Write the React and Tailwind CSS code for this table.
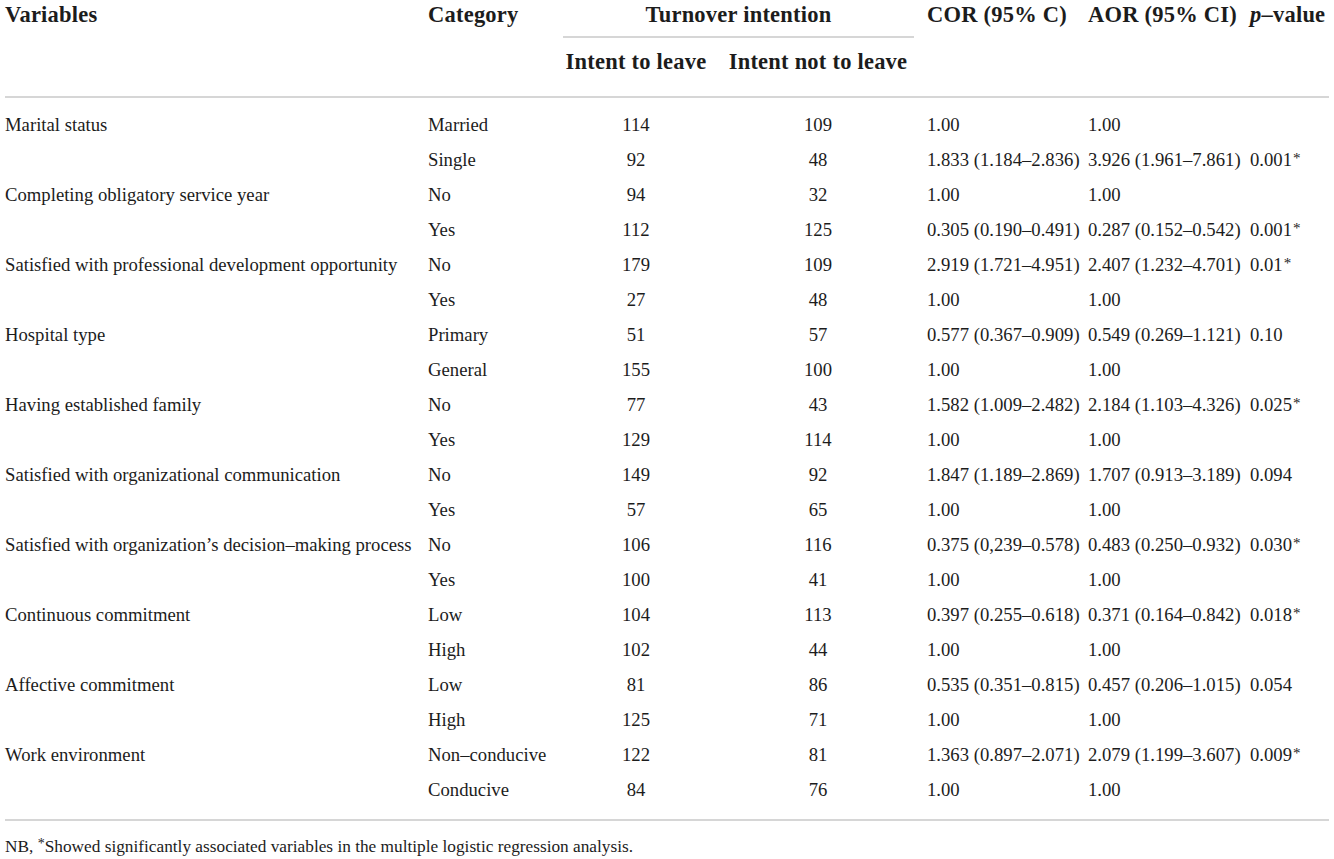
const rows = [
  ['Marital status', 'Married', '114', '109', '1.00', '1.00', ''],
  ['', 'Single', '92', '48', '1.833 (1.184–2.836)', '3.926 (1.961–7.861)', '0.001*'],
  ['Completing obligatory service year', 'No', '94', '32', '1.00', '1.00', ''],
  ['', 'Yes', '112', '125', '0.305 (0.190–0.491)', '0.287 (0.152–0.542)', '0.001*'],
  ['Satisfied with professional development opportunity', 'No', '179', '109', '2.919 (1.721–4.951)', '2.407 (1.232–4.701)', '0.01*'],
  ['', 'Yes', '27', '48', '1.00', '1.00', ''],
  ['Hospital type', 'Primary', '51', '57', '0.577 (0.367–0.909)', '0.549 (0.269–1.121)', '0.10'],
  ['', 'General', '155', '100', '1.00', '1.00', ''],
  ['Having established family', 'No', '77', '43', '1.582 (1.009–2.482)', '2.184 (1.103–4.326)', '0.025*'],
  ['', 'Yes', '129', '114', '1.00', '1.00', ''],
  ['Satisfied with organizational communication', 'No', '149', '92', '1.847 (1.189–2.869)', '1.707 (0.913–3.189)', '0.094'],
  ['', 'Yes', '57', '65', '1.00', '1.00', ''],
  ['Satisfied with organization’s decision–making process', 'No', '106', '116', '0.375 (0,239–0.578)', '0.483 (0.250–0.932)', '0.030*'],
  ['', 'Yes', '100', '41', '1.00', '1.00', ''],
  ['Continuous commitment', 'Low', '104', '113', '0.397 (0.255–0.618)', '0.371 (0.164–0.842)', '0.018*'],
  ['', 'High', '102', '44', '1.00', '1.00', ''],
  ['Affective commitment', 'Low', '81', '86', '0.535 (0.351–0.815)', '0.457 (0.206–1.015)', '0.054'],
  ['', 'High', '125', '71', '1.00', '1.00', ''],
  ['Work environment', 'Non–conducive', '122', '81', '1.363 (0.897–2.071)', '2.079 (1.199–3.607)', '0.009*'],
  ['', 'Conducive', '84', '76', '1.00', '1.00', ''],
];

const cols = 'grid grid-cols-[423px_135px_146px_218px_161px_162px_1fr]';

function PValue({ v }) {
  if (!v.endsWith('*')) return v;
  return (
    <>
      {v.slice(0, -1)}
      <span className="text-[15px] relative top-[-3px] ml-[1px]">*</span>
    </>
  );
}

export default function App() {
  return (
    <div className="w-[1334px] h-[859px] bg-white px-[5px] text-[#1c1c1c] font-['Liberation_Serif',serif] overflow-hidden">
      {/* header */}
      <div className={`${cols} grid-rows-[38px_58px] text-[22.5px] font-bold tracking-[0.01em]`}>
        <div className="leading-[30px]">Variables</div>
        <div className="leading-[30px]">Category</div>
        <div className="col-span-2 mr-[13px] border-b-2 border-[#d6d6d6] text-center leading-[30px]">
          Turnover intention
        </div>
        <div className="leading-[30px] whitespace-nowrap">COR (95% C)</div>
        <div className="leading-[30px] whitespace-nowrap">AOR (95% CI)</div>
        <div className="leading-[30px] whitespace-nowrap">
          <span className="italic">p</span>–value
        </div>
        <div />
        <div />
        <div className="h-[48px] flex items-center justify-center whitespace-nowrap">Intent to leave</div>
        <div className="h-[48px] flex items-center justify-center whitespace-nowrap">Intent not to leave</div>
        <div />
        <div />
        <div />
      </div>
      <div className="h-[2px] bg-[#d6d6d6]" />

      {/* body */}
      <div className="pt-[10px] pb-[11px] text-[18.7px]">
        {rows.map((r, i) => (
          <div key={i} className={`${cols} h-[35px] items-center whitespace-nowrap`}>
            <div>{r[0]}</div>
            <div>{r[1]}</div>
            <div className="text-center">{r[2]}</div>
            <div className="text-center">{r[3]}</div>
            <div>{r[4]}</div>
            <div>{r[5]}</div>
            <div>
              <PValue v={r[6]} />
            </div>
          </div>
        ))}
      </div>
      <div className="h-[2px] bg-[#d6d6d6]" />

      <p className="mt-[16px] text-[17.3px] leading-[20px] whitespace-nowrap">
        NB, <span className="text-[14px] relative top-[-4px]">*</span>Showed significantly associated variables in the multiple logistic regression analysis.
      </p>
    </div>
  );
}
